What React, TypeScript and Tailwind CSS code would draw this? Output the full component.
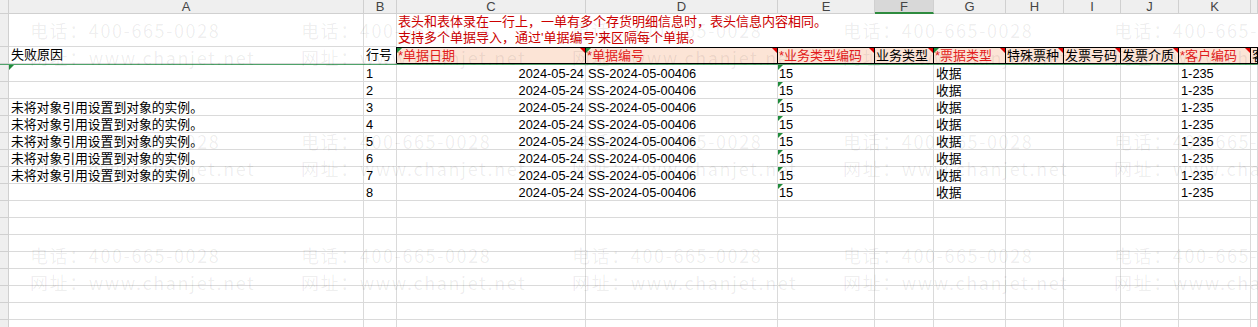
import React from "react";

const GRID =
  "grid grid-cols-[9px_355px_33px_189px_192px_97px_59px_72px_58px_57px_58px_72px_1fr]";
const FONT = "font-['Liberation_Sans','Noto_Sans_CJK_SC',sans-serif]";
const GL = "border-[#dadada]";

function TL() {
  return (
    <span className="absolute left-0 top-0 h-0 w-0 border-t-[5px] border-r-[5px] border-t-[#1f8b3b] border-r-transparent" />
  );
}
function TR() {
  return (
    <span className="absolute right-0 top-0 h-0 w-0 border-t-[5px] border-l-[5px] border-t-[#e00000] border-l-transparent" />
  );
}

const letters = ["", "A", "B", "C", "D", "E", "F", "G", "H", "I", "J", "K", ""];

type H = { t: string; red: boolean; tl?: boolean; tr?: boolean };
const heads: H[] = [
  { t: "*单据日期", red: true, tl: true, tr: true },
  { t: "*单据编号", red: true, tl: true, tr: true },
  { t: "*业务类型编码", red: true, tr: true },
  { t: "业务类型", red: false, tr: true },
  { t: "*票据类型", red: true, tl: true, tr: true },
  { t: "特殊票种", red: false, tr: true },
  { t: "发票号码", red: false, tr: true },
  { t: "发票介质", red: false, tr: true },
  { t: "*客户编码", red: true, tr: true },
  { t: "客", red: false },
];

const wmX = [30, 301, 572, 843, 1114];
const wmY = [17, 128, 242];

function DataRow({ n }: { n: number }) {
  const err = n >= 3 && n <= 7 ? "未将对象引用设置到对象的实例。" : "";
  const cell = `relative h-[17px] border-r border-b ${GL} overflow-hidden whitespace-nowrap leading-[17px]`;
  return (
    <>
      <div className={`h-[17px] border-r border-b border-[#d0d0d0] bg-[#efefef]`} />
      <div className={`${cell} pl-[2px]`}>
        {n === 1 && <TL />}
        {err}
      </div>
      <div className={`${cell} pl-[2px]`}>{n}</div>
      <div className={`${cell} pr-[1px] text-right`}>2024-05-24</div>
      <div className={`${cell} pl-[2px]`}>SS-2024-05-00406</div>
      <div className={`${cell} pl-[1px]`}>
        <TL />
        15
      </div>
      <div className={cell} />
      <div className={`${cell} pl-[2px]`}>收据</div>
      <div className={cell} />
      <div className={cell} />
      <div className={cell} />
      <div className={`${cell} pl-[2px]`}>1-235</div>
      <div className={cell} />
    </>
  );
}

function EmptyRow() {
  const cell = `h-[17px] border-r border-b ${GL}`;
  return (
    <>
      <div className={`h-[17px] border-r border-b border-[#d0d0d0] bg-[#efefef]`} />
      {Array.from({ length: 12 }).map((_, i) => (
        <div key={i} className={cell} />
      ))}
    </>
  );
}

export default function App() {
  return (
    <div
      className={`relative h-[327px] w-[1258px] overflow-hidden bg-white text-[12.8px] text-black ${FONT}`}
    >
      {/* column letters */}
      <div className={GRID}>
        {letters.map((l, i) => (
          <div
            key={i}
            className={`flex h-[14px] items-center justify-center border-r border-b text-[13px] leading-[13px] text-[#444] ${
              i === 6
                ? "border-b-2 border-r-[#d0d0d0] border-b-[#2e8b3f] bg-[#d8d8d8]"
                : "border-[#d0d0d0] bg-[#efefef]"
            }`}
          >
            {l}
          </div>
        ))}
      </div>

      {/* row 1 : instructions */}
      <div className={GRID}>
        <div className="h-[33px] border-r border-b border-[#d0d0d0] bg-[#efefef]" />
        <div className={`h-[33px] border-r border-b ${GL}`} />
        <div className={`h-[33px] border-r border-b ${GL}`} />
        <div className="col-span-10 flex h-[33px] flex-col justify-end whitespace-nowrap pb-[1px] pl-[1px] text-[13px] leading-[16px] text-[#cc0000]">
          <div>表头和表体录在一行上，一单有多个存货明细信息时，表头信息内容相同。</div>
          <div>支持多个单据导入，通过'单据编号'来区隔每个单据。</div>
        </div>
      </div>

      {/* row 2 : headers */}
      <div className={GRID}>
        <div className="h-[17px] border-r border-b border-[#d0d0d0] bg-[#efefef]" />
        <div className={`h-[17px] border-r border-b ${GL} pl-[2px] text-[13px] leading-[16px]`}>
          失败原因
        </div>
        <div className={`h-[17px] border-r border-b border-r-black ${GL} pl-[2px] text-[13px] leading-[16px]`}>
          行号
        </div>
        {heads.map((h, i) => (
          <div
            key={i}
            className={`relative h-[17px] overflow-hidden whitespace-nowrap border-t border-r border-b border-black bg-[#fce4d6] pl-[1px] text-[13px] leading-[15px] ${
              h.red ? "text-[#e31c1c]" : "text-black"
            }`}
          >
            {h.tl && <TL />}
            {h.tr && <TR />}
            {h.t}
          </div>
        ))}
      </div>

      {/* freeze line */}
      <div className="h-px w-full bg-[#4fa36a]" />

      {/* data rows */}
      <div className={GRID}>
        {[1, 2, 3, 4, 5, 6, 7, 8].map((n) => (
          <DataRow key={n} n={n} />
        ))}
        {Array.from({ length: 8 }).map((_, i) => (
          <EmptyRow key={`e${i}`} />
        ))}
      </div>

      {/* watermark */}
      <div className="pointer-events-none absolute inset-0 font-['Noto_Sans_CJK_SC',sans-serif] text-[18px] leading-[26px] tracking-[1.6px] text-black/[0.07]">
        {wmY.map((y) =>
          wmX.map((x) => (
            <div
              key={`${x}-${y}`}
              className="absolute whitespace-nowrap"
              style={{ left: x, top: y }}
            >
              <div>电话：400-665-0028</div>
              <div className="mt-[1px]">网址：www.chanjet.net</div>
            </div>
          ))
        )}
      </div>
    </div>
  );
}
